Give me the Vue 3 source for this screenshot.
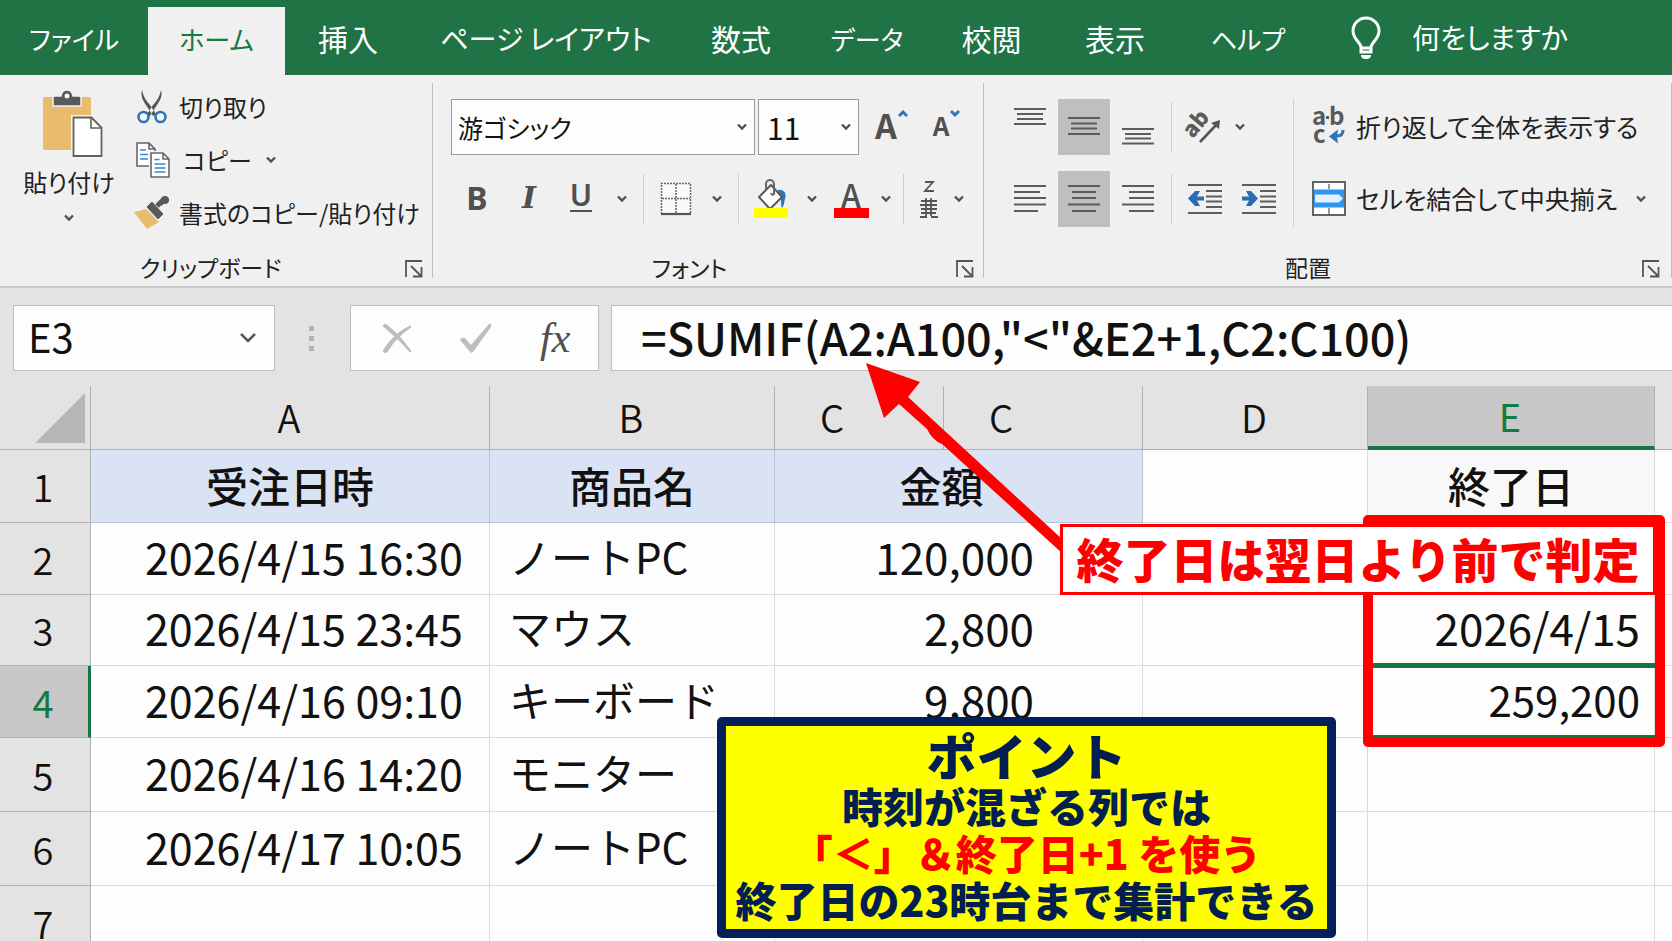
<script setup>
import { ref } from 'vue'

const tabs = ['ファイル', 'ホーム', '挿入', 'ページ レイアウト', '数式', 'データ', '校閲', '表示', 'ヘルプ']
const activeTab = ref('ホーム')
const fontName = ref('游ゴシック')
const fontSize = ref('11')
const cellName = ref('E3')
const formula = ref('=SUMIF(A2:A100,"<"&E2+1,C2:C100)')

const tabSize = (t) => (t.length === 2 ? 'large' : t.length > 5 ? '' : 'small')

const columns = ['A', 'B', 'C', 'C', 'D', 'E', '']
const rows = [
  { n: 2, date: '2026/4/15 16:30', item: 'ノートPC', amount: '120,000', end: '' },
  { n: 3, date: '2026/4/15 23:45', item: 'マウス', amount: '2,800', end: '2026/4/15' },
  { n: 4, date: '2026/4/16 09:10', item: 'キーボード', amount: '9,800', end: '259,200' },
  { n: 5, date: '2026/4/16 14:20', item: 'モニター', amount: '', end: '' },
  { n: 6, date: '2026/4/17 10:05', item: 'ノートPC', amount: '', end: '' },
  { n: 7, date: '', item: '', amount: '', end: '' }
]
</script>

<template>
  <div class="app">
    <nav class="tabs" aria-label="リボン タブ">
      <button
        v-for="t in tabs"
        :key="t"
        type="button"
        class="tab"
        :class="[tabSize(t), { active: t === activeTab }]"
        @click="activeTab = t"
      >{{ t }}</button>
      <button type="button" class="tab tell">
        <svg width="32" height="44" viewBox="0 0 32 44" fill="none" stroke="#fff" stroke-width="3">
          <path d="M11 36v-5c0-4-8-8-8-16a13 13 0 0 1 26 0c0 8-8 12-8 16v5z" />
          <path d="M11 32h10" />
          <path d="M11 39h10c0 3-2 4-5 4s-5-1-5-4z" fill="#fff" stroke="none" />
        </svg>
        <span>何をしますか</span>
      </button>
    </nav>

    <div class="ribbon">
      <section class="group clipboard">
        <div class="tools clip-tools">
          <button type="button" class="paste">
            <svg class="board" width="60" height="68" viewBox="0 0 60 68">
              <rect x="0" y="7" width="48" height="53" rx="2" fill="#e9bb6c" />
              <path d="M10 8q0-2 2-2h6q1-6 6-6t6 6h6q2 0 2 2v8H10z" fill="#595959" stroke="#f0f0f0" stroke-width="1.5" />
              <circle cx="24" cy="6" r="2.5" fill="#f5f5f5" />
              <path d="M28 25h22l10 10v33H28z" fill="#f4f4f4" />
              <path d="M30.5 27.500h18l10 10V66h-28z" fill="#fff" stroke="#606060" stroke-width="1.8" />
              <path d="M48 27.500V38h10.500" fill="none" stroke="#606060" stroke-width="1.6" />
            </svg>
            <span>貼り付け</span>
            <svg class="chev" width="12" height="8" viewBox="0 0 12 8"><path d="M2 1.500l4 4 4-4" /></svg>
          </button>
          <div class="clip-list">
            <button type="button" class="line">
              <svg width="36" height="36" viewBox="0 0 36 36">
                <path d="M8 1c1 6 4 11 8 15l6 9-3 2-5-8C10 13 6 8 8 1zM27 1c-1 6-4 11-8 15l-6 9 3 2 5-8C25 13 29 8 27 1z" fill="#555" />
                <circle cx="9.500" cy="28" r="5" fill="#f7f7f7" stroke="#2e74b8" stroke-width="2.600" />
                <circle cx="26.500" cy="28" r="5" fill="#f7f7f7" stroke="#2e74b8" stroke-width="2.600" />
              </svg>
              <span>切り取り</span>
            </button>
            <button type="button" class="line copy">
              <svg width="36" height="36" viewBox="0 0 36 36" fill="#fff" stroke="#666" stroke-width="1.600">
                <path d="M3 1h12l6 6v17H3zM15 1v6h6" />
                <path d="M6 8h6M6 12.500h8M6 17h8" stroke="#3a86d0" />
                <path d="M17 11h12l6 6v18H17z" stroke="#f4f4f4" stroke-width="4" />
                <path d="M17 11h12l6 6v18H17zM29 11v6h6" />
                <path d="M20.500 17.500h5M20.500 22h11M20.500 26h11M20.500 30h11" stroke="#3a86d0" />
              </svg>
              <span>コピー</span>
              <svg class="chev" width="12" height="8" viewBox="0 0 12 8"><path d="M2 1.500l4 4 4-4" /></svg>
            </button>
            <button type="button" class="line">
              <svg width="36" height="36" viewBox="0 0 36 36">
                <path d="M0 17l12-3 13 13-12 7z" fill="#e9bb6c" />
                <path d="M18 6l12 13-6 6-12-13z" fill="#595959" stroke="#f0f0f0" stroke-width="1" />
                <path d="M23 11l7-7M26 9l5-5" stroke="#595959" stroke-width="5" />
                <circle cx="31" cy="5" r="4" fill="#595959" />
              </svg>
              <span>書式のコピー/貼り付け</span>
            </button>
          </div>
        </div>
        <footer class="caption">
          <span>クリップボード</span>
          <button type="button" class="launch" aria-label="クリップボードの詳細">
            <svg width="18" height="18" viewBox="0 0 18 18"><path d="M1 17V1h16M6 6l10 10M16.500 7v9.500H8" /></svg>
          </button>
        </footer>
      </section>

      <section class="group font">
        <div class="tools font-tools">
          <div class="row">
            <label class="pick name">
              <select v-model="fontName" aria-label="フォント名"><option>游ゴシック</option></select>
              <svg class="chev" width="12" height="8" viewBox="0 0 12 8"><path d="M2 1.500l4 4 4-4" /></svg>
            </label>
            <label class="pick size">
              <select v-model="fontSize" aria-label="フォント サイズ"><option>11</option></select>
              <svg class="chev" width="12" height="8" viewBox="0 0 12 8"><path d="M2 1.500l4 4 4-4" /></svg>
            </label>
            <button type="button" class="tool grow" aria-label="フォント サイズの拡大">
              <span>A</span>
              <svg width="12" height="9" viewBox="0 0 12 9"><path d="M2 7l4-4 4 4" fill="none" stroke="#2e74b8" stroke-width="3" /></svg>
            </button>
            <button type="button" class="tool grow shrink" aria-label="フォント サイズの縮小">
              <span>A</span>
              <svg width="12" height="9" viewBox="0 0 12 9"><path d="M2 2l4 4 4-4" fill="none" stroke="#2e74b8" stroke-width="3" /></svg>
            </button>
          </div>
          <div class="row">
            <button type="button" class="tool letter bold">B</button>
            <button type="button" class="tool letter italic">I</button>
            <button type="button" class="tool letter under"><span>U</span></button>
            <button type="button" class="drop" aria-label="下線の種類"><svg class="chev" width="12" height="8" viewBox="0 0 12 8"><path d="M2 1.500l4 4 4-4" /></svg></button>
            <i class="sep"></i>
            <button type="button" class="tool" aria-label="罫線">
              <svg width="32" height="34" viewBox="0 0 32 34" fill="none" stroke="#666">
                <rect x="1" y="1" width="30" height="31" fill="#fafafa" stroke="none" />
                <path d="M1.500 32V1.500h29V32M16 2v30M2 16.500h28" stroke-width="1.500" stroke-dasharray="2 1" />
                <path d="M1 32h30" stroke-width="2.200" stroke="#555" />
              </svg>
            </button>
            <button type="button" class="drop" aria-label="罫線の種類"><svg class="chev" width="12" height="8" viewBox="0 0 12 8"><path d="M2 1.500l4 4 4-4" /></svg></button>
            <i class="sep"></i>
            <button type="button" class="tool" aria-label="塗りつぶしの色">
              <svg width="34" height="40" viewBox="0 0 34 40">
                <path d="M24 11c6-1 9 4 7 9-1 3-1 7-3 9-2-4 1-9-4-15z" fill="#2e74b8" />
                <path d="M17 6l11 12-12 12L5 18z" fill="#fff" stroke="#595959" stroke-width="2" />
                <path d="M12 11V5a4 4 0 0 1 8 0v10q-2 2-3-1" fill="none" stroke="#666" stroke-width="2" />
                <rect x="0" y="29" width="34" height="10" fill="#ff0" />
              </svg>
            </button>
            <button type="button" class="drop" aria-label="塗りつぶしの色を選択"><svg class="chev" width="12" height="8" viewBox="0 0 12 8"><path d="M2 1.500l4 4 4-4" /></svg></button>
            <button type="button" class="tool tint" aria-label="フォントの色"><span>A</span><i></i></button>
            <button type="button" class="drop narrow" aria-label="フォントの色を選択"><svg class="chev" width="12" height="8" viewBox="0 0 12 8"><path d="M2 1.500l4 4 4-4" /></svg></button>
            <i class="sep"></i>
            <button type="button" class="tool phonetic" aria-label="ふりがなの表示">
              <svg width="20" height="38" viewBox="0 0 20 38" fill="none" stroke="#555" stroke-width="1.800">
                <path d="M6 2h8L6 11h9" />
                <path d="M7 18v18M12 18v18M2 21h16M1 25h17M2 29h16M2 33h15M1 37h7M12 37h7" />
              </svg>
            </button>
            <button type="button" class="drop narrow" aria-label="ふりがなの設定"><svg class="chev" width="12" height="8" viewBox="0 0 12 8"><path d="M2 1.500l4 4 4-4" /></svg></button>
          </div>
        </div>
        <footer class="caption">
          <span>フォント</span>
          <button type="button" class="launch" aria-label="フォントの詳細">
            <svg width="18" height="18" viewBox="0 0 18 18"><path d="M1 17V1h16M6 6l10 10M16.500 7v9.500H8" /></svg>
          </button>
        </footer>
      </section>

      <section class="group align">
        <div class="tools align-tools">
          <div class="align-grid">
            <div class="row snug">
              <button type="button" class="tool" aria-label="上揃え"><svg class="lines" width="34" height="40" viewBox="0 0 34 40"><path d="M1 2h32M4 7h26M4 12h26M1 17h32" /></svg></button>
              <button type="button" class="tool on" aria-label="上下中央揃え"><svg class="lines" width="34" height="40" viewBox="0 0 34 40"><path d="M1 11h32M4 16.500h26M4 21.500h26M1 27h32" /></svg></button>
              <button type="button" class="tool" aria-label="下揃え"><svg class="lines" width="34" height="40" viewBox="0 0 34 40"><path d="M1 22h32M4 27h26M4 31.500h26M1 36.500h32" /></svg></button>
              <i class="sep"></i>
              <button type="button" class="tool orient" aria-label="方向">
                <svg class="loose" width="36" height="34" viewBox="0 0 36 34">
                  <text x="3" y="25" transform="rotate(-50 10 22)" font-size="22" font-weight="900" fill="#5c5c5c">ab</text>
                  <path d="M15 32L33 13" fill="none" stroke="#555" stroke-width="2.600" />
                  <path d="M26 13l9-3-1 9z" fill="#555" />
                </svg>
              </button>
              <button type="button" class="drop narrow" aria-label="方向の種類"><svg class="chev" width="12" height="8" viewBox="0 0 12 8"><path d="M2 1.500l4 4 4-4" /></svg></button>
            </div>
            <div class="row snug">
              <button type="button" class="tool" aria-label="左揃え"><svg class="lines" width="34" height="30" viewBox="0 0 34 30"><path d="M1 2h32M1 8h26M1 14h32M1 20.500h32M1 27h24" /></svg></button>
              <button type="button" class="tool on" aria-label="中央揃え"><svg class="lines" width="34" height="30" viewBox="0 0 34 30"><path d="M1 2h32M5 8h24M5 14h24M1 20.500h32M5 27h24" /></svg></button>
              <button type="button" class="tool" aria-label="右揃え"><svg class="lines" width="34" height="30" viewBox="0 0 34 30"><path d="M1 2h32M8 8h25M8 14h25M1 20.500h32M8 27h25" /></svg></button>
              <i class="sep"></i>
              <button type="button" class="tool" aria-label="インデントを減らす">
                <svg class="lines" width="36" height="34" viewBox="0 0 36 34">
                  <path d="M1 3h34M19 9h16M19 14.500h16M19 19.500h16M19 25h16M1 31h34" />
                  <path d="M1 16.500L8 9h5l-3 5.500h7v4h-7l3 5.500H8z" class="blue" />
                </svg>
              </button>
              <button type="button" class="tool" aria-label="インデントを増やす">
                <svg class="lines" width="36" height="34" viewBox="0 0 36 34">
                  <path d="M1 3h34M19 9h16M19 14.500h16M19 19.500h16M19 25h16M1 31h34" />
                  <path d="M17 16.500L10 9H5l3 5.500H1v4h7L5 24h5z" class="blue" />
                </svg>
              </button>
            </div>
          </div>
          <i class="sep tall"></i>
          <div class="wraps">
            <button type="button" class="line">
              <svg class="loose" width="34" height="36" viewBox="0 0 34 36">
                <text x="0" y="16" font-size="24" font-weight="700" fill="#595959">a</text>
                <rect x="14" y="7" width="3" height="3" fill="#595959" />
                <text x="17" y="16" font-size="24" font-weight="700" fill="#595959">b</text>
                <text x="1" y="34" font-size="24" font-weight="700" fill="#595959">c</text>
                <path d="M31 21q0 6-6 6" fill="none" stroke="#2e74b8" stroke-width="3" />
                <path d="M17 27.500l9-7-1 7 1 7z" fill="#2e74b8" />
              </svg>
              <span>折り返して全体を表示する</span>
            </button>
            <button type="button" class="line">
              <svg width="34" height="36" viewBox="0 0 34 36">
                <rect x="1" y="1" width="32" height="33" fill="#fff" stroke="#555" stroke-width="1.800" />
                <path d="M17 3v5M17 27v6" stroke="#777" stroke-width="1.500" />
                <rect x="2" y="8.500" width="30" height="18" fill="#2f95ee" />
                <path d="M3 13.500h24l4 4-4 4H3z" fill="#dff3fe" />
              </svg>
              <span>セルを結合して中央揃え</span>
              <svg class="chev merge-chev" width="12" height="8" viewBox="0 0 12 8"><path d="M2 1.500l4 4 4-4" /></svg>
            </button>
          </div>
        </div>
        <footer class="caption">
          <span>配置</span>
          <button type="button" class="launch" aria-label="配置の詳細">
            <svg width="18" height="18" viewBox="0 0 18 18"><path d="M1 17V1h16M6 6l10 10M16.500 7v9.500H8" /></svg>
          </button>
        </footer>
      </section>
    </div>

    <div class="formula-bar">
      <div class="box cell-box">
        <input v-model="cellName" aria-label="名前ボックス">
        <button type="button" aria-label="名前の一覧">
          <svg width="18" height="12" viewBox="0 0 18 12"><path d="M2 2l7 7 7-7" fill="none" stroke="#595959" stroke-width="2.600" /></svg>
        </button>
      </div>
      <div class="dots"><i></i><i></i><i></i></div>
      <div class="box actions">
        <button type="button" aria-label="キャンセル">
          <svg width="30" height="32" viewBox="0 0 30 32"><path d="M1 4q1-3 4-1 13 10 24 26l-1 1Q17 17 1 4zM28 4l1 1Q13 16 5 30q-3 2-4-1Q11 12 28 4z" fill="#bdbdbd" stroke="#bdbdbd" /></svg>
        </button>
        <button type="button" aria-label="入力">
          <svg width="34" height="32" viewBox="0 0 34 32"><path d="M1 18q2-4 6-1l5 6L30 2q3-1 2 3L14 30l-2 1z" fill="#bdbdbd" /></svg>
        </button>
        <button type="button" class="fx" aria-label="関数の挿入">fx</button>
      </div>
      <div class="box formula"><input v-model="formula" aria-label="数式バー"></div>
    </div>

    <main class="sheet">
      <table>
        <colgroup>
          <col class="c-head"><col class="c-a"><col class="c-b"><col class="c-c1"><col class="c-c2"><col class="c-d"><col class="c-e"><col>
        </colgroup>
        <thead>
          <tr>
            <th class="corner"><svg width="50" height="50" viewBox="0 0 50 50"><path d="M50 0v50H0z" fill="#b7b7b7" /></svg></th>
            <th v-for="(c, i) in columns" :key="i" scope="col" :class="['h' + i, { current: c === 'E' }]">{{ c }}</th>
          </tr>
        </thead>
        <tbody>
          <tr class="titles">
            <th scope="row">1</th>
            <td class="blue-cell">受注日時</td>
            <td class="blue-cell">商品名</td>
            <td class="blue-cell amount-title" colspan="2">金額</td>
            <td></td>
            <td class="end-title">終了日</td>
            <td></td>
          </tr>
          <tr v-for="r in rows" :key="r.n" :class="'r' + r.n">
            <th scope="row" :class="{ current: r.n === 4 }">{{ r.n }}</th>
            <td class="date">{{ r.date }}</td>
            <td class="item">{{ r.item }}</td>
            <td class="amount" colspan="2">{{ r.amount }}</td>
            <td></td>
            <td class="end">{{ r.end }}</td>
            <td></td>
          </tr>
        </tbody>
      </table>

      <div class="selection"></div>
      <div class="frame"></div>
      <svg class="arrow" width="200" height="194" viewBox="0 0 200 194">
        <path d="M0 0l54 19-12 15 154 142v14L76 81q-10-4-15-15L33 41 18 55z" fill="#f00" />
      </svg>
      <div class="callout">終了日は翌日より前で判定</div>
      <aside class="note">
        <h2>ポイント</h2>
        <p>時刻が混ざる列では</p>
        <p class="red">「＜」＆終了日+1 を使う</p>
        <p>終了日の23時台まで集計できる</p>
      </aside>
    </main>
  </div>
</template>

<style>
body {
  margin: 0;
  overflow: hidden;
}
</style>

<style scoped>
.app {
  height: 100vh;
  display: flex;
  flex-direction: column;
  overflow: hidden;
  background: #fdfdfd;
  color: #111;
  font-family: "Noto Sans CJK JP", "Noto Sans", sans-serif;
}
.app * {
  box-sizing: border-box;
}
button,
input,
select {
  margin: 0;
  padding: 0;
  border: 0;
  border-radius: 0;
  background: none;
  color: inherit;
  font: inherit;
  appearance: none;
  outline: none;
}
svg {
  display: block;
  flex: none;
}
.loose {
  overflow: visible;
}
.chev path {
  fill: none;
  stroke: #505050;
  stroke-width: 2.4;
}

.tabs {
  display: grid;
  grid-template-columns: 148px 137px 126px 270px 120px 132px 117px 130px 136px 1fr;
  flex: none;
  height: 75px;
  padding-top: 7px;
  background: #1f7345;
}
.tab {
  padding-bottom: 6px;
  color: #fff;
  font-size: 28px;
  white-space: nowrap;
  font-feature-settings: "palt";
}
.tab.large {
  font-size: 30px;
}
.tab.small {
  font-size: 26px;
}
.tab.active {
  background: #f0f0f0;
  color: #137a42;
}
.tell {
  display: flex;
  align-items: center;
  gap: 30px;
  padding-left: 34px;
}
.tell span {
  padding-bottom: 3px;
}

.ribbon {
  display: flex;
  flex: none;
  height: 213px;
  background: #f0f0f0;
  border-bottom: 2px solid #cacaca;
  color: #222;
  font-size: 25px;
  font-feature-settings: "palt";
}
.group {
  position: relative;
  display: flex;
  flex-direction: column;
  justify-content: space-between;
}
.group::after {
  content: "";
  position: absolute;
  top: 8px;
  right: 0;
  bottom: 8px;
  width: 1px;
  background: #bdbdbd;
}
.clipboard {
  flex: none;
  width: 433px;
}
.font {
  flex: none;
  width: 551px;
}
.align {
  flex: 1;
}
.tools {
  display: flex;
}
.caption {
  display: flex;
  align-items: center;
  height: 38px;
  font-size: 23px;
}
.caption span {
  flex: 1;
  text-align: center;
}
.clipboard .caption {
  padding-left: 26px;
}
.align .caption {
  padding-right: 2px;
}
.launch {
  width: 38px;
  padding-left: 10px;
  padding-top: 4px;
}
.launch path {
  fill: none;
  stroke: #555;
  stroke-width: 1.8;
}
.clip-tools {
  padding: 5px 0 0 17px;
  font-size: 24px;
}
.paste {
  display: flex;
  flex-direction: column;
  align-items: center;
  flex: none;
  width: 104px;
  padding: 10px 0 0;
}
.board {
  margin-left: 8px;
}
.paste span {
  margin: 6px 0 14px;
  line-height: 36px;
}
.clip-list {
  display: flex;
  flex-direction: column;
  padding-left: 13px;
}
.line {
  display: flex;
  align-items: center;
  gap: 9px;
  height: 53px;
  white-space: nowrap;
}
.copy {
  gap: 13px;
}
.row {
  display: flex;
  align-items: center;
  height: 56px;
}
.snug {
  gap: 2px;
}
.font-tools {
  flex-direction: column;
  gap: 16px;
  padding: 24px 0 0 18px;
}
.pick {
  display: flex;
  align-items: center;
  height: 56px;
  padding: 0 6px;
  margin-right: 3px;
  border: 1px solid #9a9a9a;
  background: #fdfdfd;
  color: #111;
}
.pick select {
  flex: 1;
  min-width: 0;
  height: 100%;
}
.name {
  width: 304px;
}
.size {
  width: 101px;
  padding-left: 8px;
  font-size: 30px;
}
.tool {
  display: flex;
  align-items: center;
  justify-content: center;
  flex: none;
  width: 52px;
  height: 56px;
  color: #505050;
}
.tool.on {
  background: #bfbfbf;
}
.tool.orient {
  width: 48px;
}
.drop {
  display: flex;
  align-items: center;
  justify-content: center;
  flex: none;
  width: 30px;
  height: 56px;
}
.drop.narrow {
  width: 22px;
}
.sep {
  flex: none;
  width: 1px;
  height: 50px;
  margin: 0 6px;
  background: #cfcfcf;
}
.snug .sep {
  margin: 0 5px;
}
.sep.tall {
  height: 128px;
  margin: 0 8px;
}
.grow {
  align-items: baseline;
  width: 60px;
  line-height: 52px;
  font-weight: 700;
  font-size: 34px;
}
.grow svg {
  align-self: flex-start;
  margin-top: 10px;
}
.shrink {
  width: 50px;
  font-size: 26px;
}
.letter {
  padding-bottom: 4px;
  font-size: 32px;
  font-weight: 700;
}
.bold,
.under {
  font-family: "Noto Sans", sans-serif;
}
.italic {
  font-family: "DejaVu Serif", serif;
  font-style: italic;
  font-size: 30px;
}
.under span {
  line-height: 26px;
  height: 30px;
  border-bottom: 2px solid #505050;
  font-size: 30px;
  font-weight: 600;
}
.tint {
  flex-direction: column;
  width: 48px;
  font-size: 32px;
  font-weight: 500;
}
.tint span {
  height: 27px;
  line-height: 26px;
}
.tint i {
  width: 35px;
  height: 10px;
  background: #f00;
}
.phonetic {
  width: 38px;
}
.align-tools {
  padding: 24px 0 0 20px;
}
.align-grid {
  display: flex;
  flex-direction: column;
  gap: 16px;
}
.lines path {
  fill: none;
  stroke: #5c5c5c;
  stroke-width: 2;
}
.lines .blue {
  fill: #2b6cb3;
  stroke: none;
}
.wraps {
  display: flex;
  flex-direction: column;
  gap: 16px;
  padding-left: 10px;
}
.wraps .line {
  gap: 10px;
  height: 56px;
}
.wraps span {
  padding-bottom: 3px;
}
.merge-chev {
  margin-left: 8px;
}

.formula-bar {
  display: flex;
  flex: none;
  height: 98px;
  padding: 17px 0 15px 13px;
  background: #e3e3e3;
}
.box {
  display: flex;
  align-items: center;
  border: 1px solid #bdbdbd;
  background: #fdfdfd;
}
.cell-box {
  width: 262px;
  padding: 0 17px 0 14px;
}
.box input {
  height: 62px;
  padding-bottom: 4px;
}
.cell-box input {
  flex: 1;
  min-width: 0;
  font-size: 40px;
}
.dots {
  display: flex;
  flex-direction: column;
  justify-content: center;
  gap: 5px;
  width: 75px;
  padding-left: 34px;
}
.dots i {
  width: 5px;
  height: 5px;
  background: #b4b4b4;
}
.actions {
  width: 249px;
  padding-left: 31px;
  gap: 47px;
}
.fx {
  color: #505050;
  font-family: "Liberation Serif", serif;
  font-size: 42px;
  font-style: italic;
  line-height: 46px;
}
.formula {
  flex: 1;
  margin-left: 12px;
  border-right: 0;
}
.formula input {
  width: 100%;
  padding-left: 29px;
  font-size: 45px;
  font-weight: 500;
}

.sheet {
  position: relative;
  flex: 1;
}
table {
  width: 100%;
  table-layout: fixed;
  border-collapse: separate;
  border-spacing: 0;
}
.c-head { width: 91px; }
.c-a { width: 399px; }
.c-b { width: 285px; }
.c-c1 { width: 169px; }
.c-c2 { width: 199px; }
.c-d { width: 225px; }
.c-e { width: 287px; }
th,
td {
  padding: 0 0 6px;
  border-right: 1px solid #dcdcdc;
  border-bottom: 1px solid #dcdcdc;
  font-weight: 400;
  line-height: 60px;
  white-space: nowrap;
}
th {
  padding-bottom: 0;
  background: #e3e3e3;
  border-color: #b0b0b0;
  font-size: 38px;
  font-weight: 350;
}
thead th {
  height: 64px;
  padding: 0 2px 2px 0;
}
thead th:last-child,
td:last-child {
  border-right: 0;
}
thead .h2 {
  padding-right: 54px;
}
thead .h3 {
  padding-right: 84px;
}
th.current {
  background: #c8c8c8;
  color: #137a42;
}
thead th.current {
  padding-bottom: 0;
  border-bottom: 4px solid #177544;
  font-weight: 400;
  line-height: 58px;
}
.corner svg {
  margin: 2px 0 0 35px;
}
tbody th {
  padding-right: 4px;
}
tbody th.current {
  padding-right: 2px;
  border-right: 3px solid #177544;
  font-weight: 400;
}
.titles td {
  height: 73px;
  padding-bottom: 2px;
  text-align: center;
  font-size: 42px;
  font-weight: 500;
}
.titles .blue-cell {
  background: #dae3f3;
  border-color: #b9c2d2;
}
.titles .amount-title {
  padding-right: 34px;
}
.titles .end-title {
  background: #f8f8f8;
}
.r2 td { height: 72px; }
.r3 td { height: 71px; }
.r4 td { height: 72px; }
.r5 td, .r6 td, .r7 td { height: 74px; }
.date {
  padding-left: 54px;
  font-size: 43px;
}
.item {
  padding-left: 19px;
  font-size: 42px;
}
.amount {
  padding-right: 108px;
  font-size: 44px;
  text-align: right;
}
.end {
  padding-right: 14px;
  font-size: 44px;
  text-align: right;
}
.r4 .end {
  font-size: 42px;
}

.selection,
.frame,
.arrow,
.callout,
.note {
  position: absolute;
}
.selection {
  left: 1371px;
  top: 277px;
  width: 286px;
  height: 76px;
  border: 2px solid #177544;
  border-width: 5px 2px 4px;
}
.frame {
  left: 1363px;
  top: 129px;
  width: 302px;
  height: 232px;
  border: 10px solid #f00;
  border-radius: 5px;
}
.arrow {
  left: 866px;
  top: -23px;
}
.callout {
  left: 1060px;
  top: 138px;
  width: 596px;
  height: 71px;
  border: 3px solid #f00;
  background: #fff;
  color: #f00;
  font-size: 47px;
  font-weight: 900;
  line-height: 62px;
  text-align: center;
  white-space: nowrap;
}
.note {
  left: 717px;
  top: 331px;
  width: 619px;
  height: 221px;
  border: 9px solid #03205a;
  border-radius: 5px;
  background: #ff0;
  color: #031f50;
  font-weight: 900;
  text-align: center;
  white-space: nowrap;
}
.note h2 {
  margin: 0;
  font-size: 50px;
  font-weight: 900;
  line-height: 56px;
}
.note p {
  margin: 0;
  font-size: 41px;
  line-height: 47px;
}
.note .red {
  color: #f00;
}
</style>
